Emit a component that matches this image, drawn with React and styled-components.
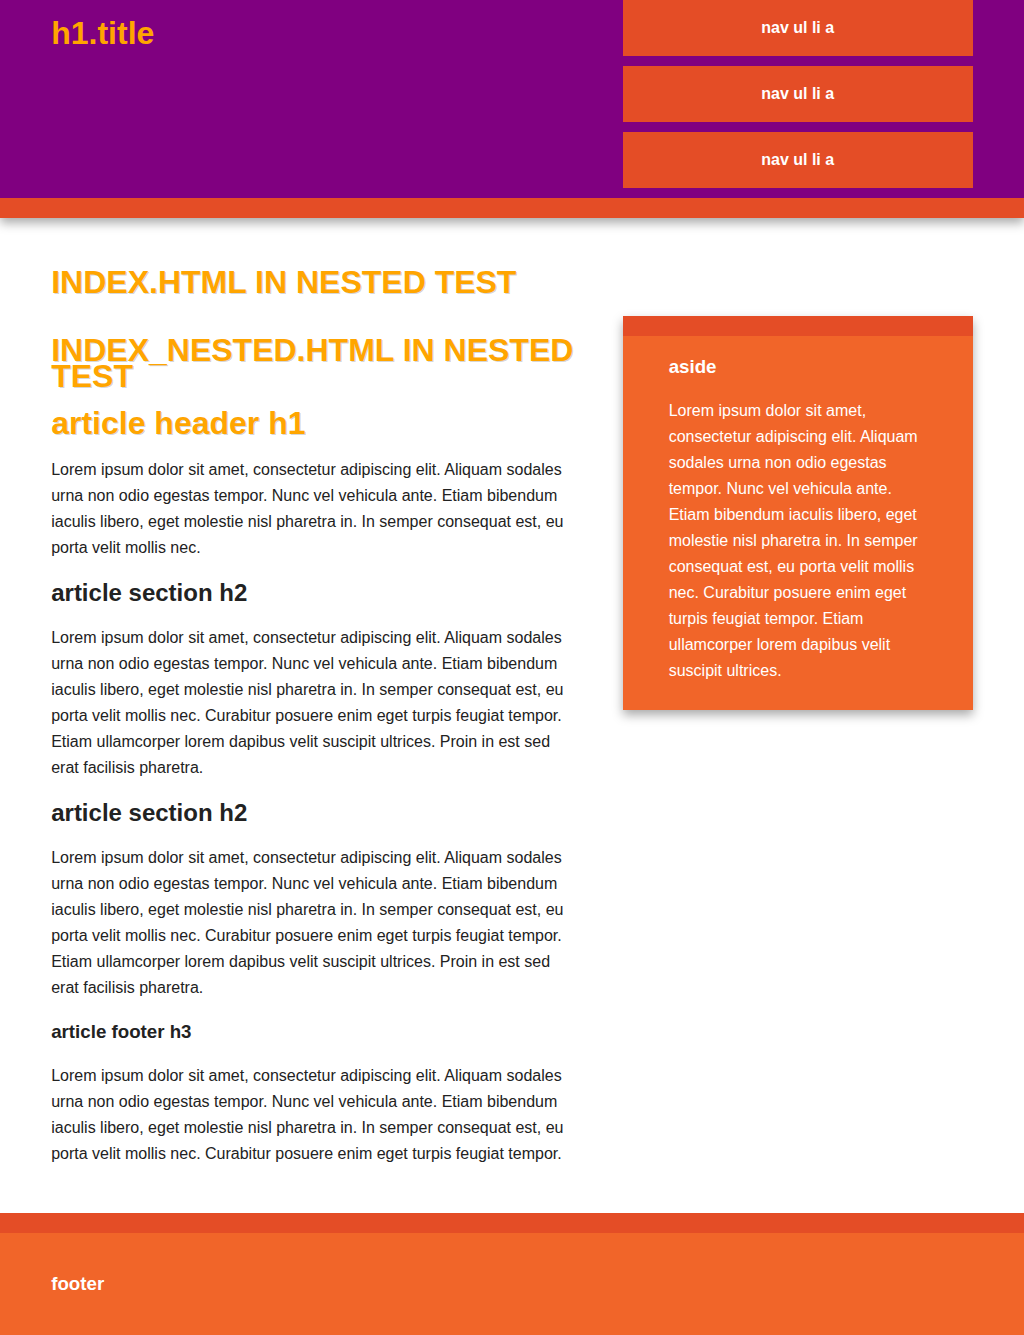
import React from "react";
import styled, { createGlobalStyle } from "styled-components";

const GlobalStyle = createGlobalStyle`
  html, body { margin: 0; padding: 0; }
  body {
    font: 16px/26px "Liberation Sans", Arial, Helvetica, sans-serif;
    color: #222;
    background: #fff;
  }
`;

const HeaderContainer = styled.div`
  background: #800080;
  border-bottom: 20px solid #e44d26;
  box-shadow: 0 5px 10px #aaa;
  position: relative;
  z-index: 1;
`;

const Wrapper = styled.div`
  width: 90%;
  margin: 0 5%;
`;

const HeaderRow = styled(Wrapper)`
  display: flex;
  justify-content: space-between;
  align-items: flex-start;
`;

const Title = styled.h1`
  font-size: 32px;
  line-height: 26px;
  font-weight: bold;
  color: #ffa500;
  margin: 20px 0;
`;

const Nav = styled.nav`
  width: 38%;
`;

const NavList = styled.ul`
  margin: 0;
  padding: 0;
  list-style: none;
`;

const NavLink = styled.a`
  display: block;
  margin-bottom: 10px;
  padding: 15px 0;
  text-align: center;
  text-decoration: none;
  font-weight: bold;
  color: #fff;
  background: #e44d26;
`;

const Main = styled(Wrapper)`
  padding: 30px 0;
`;

const BigHeading = styled.h1`
  font-size: 32px;
  line-height: 26px;
  font-weight: bold;
  color: #ffa500;
  text-transform: ${(p) => (p.$upper ? "uppercase" : "none")};
  text-shadow: 1px 1px 0 rgba(0, 0, 0, 0.18);
  margin: 21px 0;
`;

const Columns = styled.div`
  display: flex;
  justify-content: space-between;
  align-items: flex-start;
`;

const Article = styled.article`
  width: 57%;
`;

const Para = styled.p`
  margin: 16px 0;
`;

const H2 = styled.h2`
  font-size: 24px;
  line-height: 26px;
  font-weight: bold;
  margin: 19px 0;
`;

const H3 = styled.h3`
  font-size: 18.72px;
  line-height: 26px;
  font-weight: bold;
  margin: 18px 0;
`;

const Aside = styled.aside`
  width: 28%;
  background: #f16529;
  border-top: 20px solid #e44d26;
  color: #fff;
  padding: 0 5% 10px 5%;
  box-shadow: 0 5px 10px #aaa;
`;

const FooterContainer = styled.div`
  background: #f16529;
  border-top: 20px solid #e44d26;
`;

const Footer = styled(Wrapper).attrs({ as: "footer" })`
  color: #fff;
  padding: 20px 0;
`;

const LOREM_SHORT =
  "Lorem ipsum dolor sit amet, consectetur adipiscing elit. Aliquam sodales urna non odio egestas tempor. Nunc vel vehicula ante. Etiam bibendum iaculis libero, eget molestie nisl pharetra in. In semper consequat est, eu porta velit mollis nec.";
const LOREM_LONG =
  LOREM_SHORT +
  " Curabitur posuere enim eget turpis feugiat tempor. Etiam ullamcorper lorem dapibus velit suscipit ultrices. Proin in est sed erat facilisis pharetra.";
const LOREM_FOOT = LOREM_SHORT + " Curabitur posuere enim eget turpis feugiat tempor.";
const LOREM_ASIDE =
  LOREM_SHORT +
  " Curabitur posuere enim eget turpis feugiat tempor. Etiam ullamcorper lorem dapibus velit suscipit ultrices.";

export default function App() {
  return (
    <>
      <GlobalStyle />
      <HeaderContainer>
        <HeaderRow as="header">
          <Title>h1.title</Title>
          <Nav>
            <NavList>
              {[0, 1, 2].map((i) => (
                <li key={i}>
                  <NavLink href="#">nav ul li a</NavLink>
                </li>
              ))}
            </NavList>
          </Nav>
        </HeaderRow>
      </HeaderContainer>

      <Main>
        <BigHeading $upper>index.html in nested test</BigHeading>
        <Columns>
          <Article>
            <BigHeading $upper>index_nested.html in nested test</BigHeading>
            <header>
              <BigHeading>article header h1</BigHeading>
              <Para>{LOREM_SHORT}</Para>
            </header>
            <section>
              <H2>article section h2</H2>
              <Para>{LOREM_LONG}</Para>
            </section>
            <section>
              <H2>article section h2</H2>
              <Para>{LOREM_LONG}</Para>
            </section>
            <footer>
              <H3>article footer h3</H3>
              <Para>{LOREM_FOOT}</Para>
            </footer>
          </Article>
          <Aside>
            <H3>aside</H3>
            <Para>{LOREM_ASIDE}</Para>
          </Aside>
        </Columns>
      </Main>

      <FooterContainer>
        <Footer>
          <H3>footer</H3>
        </Footer>
      </FooterContainer>
    </>
  );
}
